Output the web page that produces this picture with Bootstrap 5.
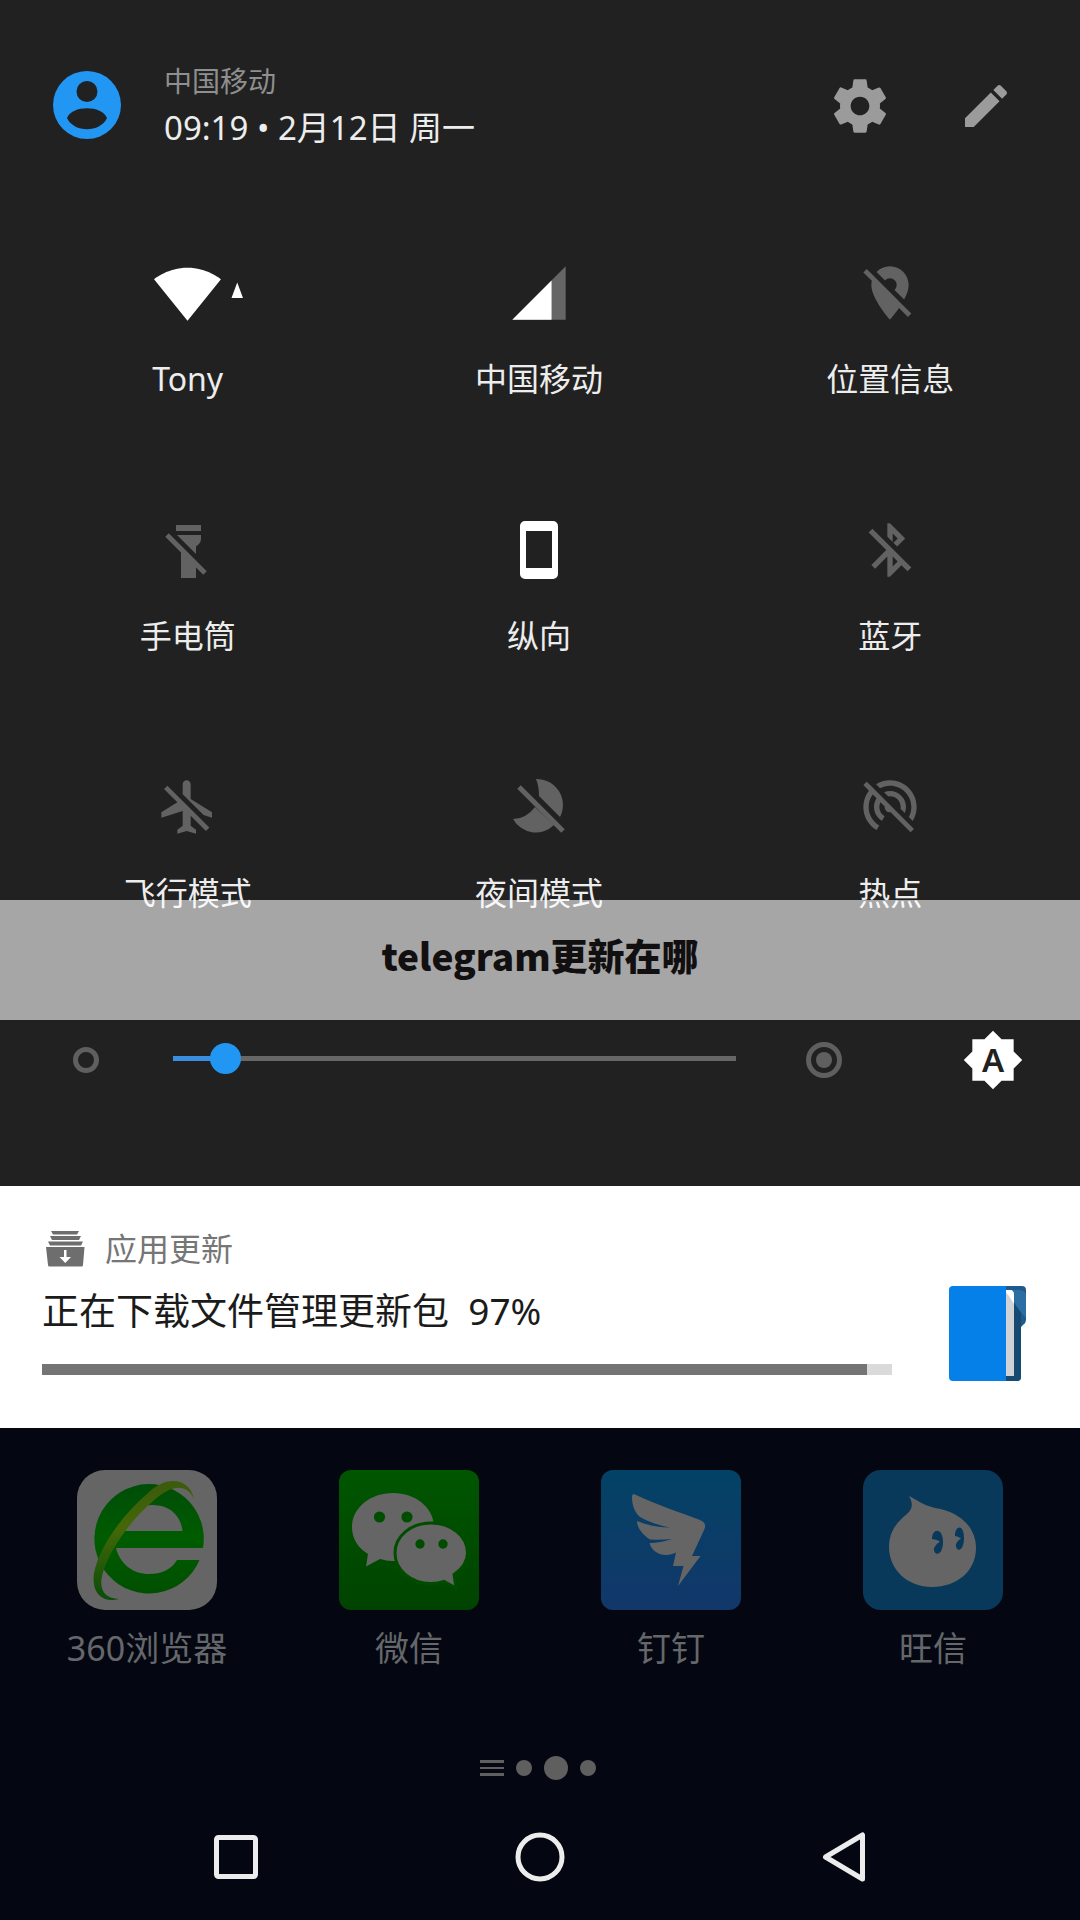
<!DOCTYPE html>
<html lang="zh-CN">
<head>
<meta charset="utf-8">
<meta name="viewport" content="width=device-width, initial-scale=1">
<title>快捷设置</title>
<link href="https://cdn.jsdelivr.net/npm/bootstrap@5.3.0/dist/css/bootstrap.min.css" rel="stylesheet">
<style>
  body { background: #040711; font-family: "Noto Sans", "Noto Sans CJK SC", sans-serif; }
  svg { display: block; overflow: visible; flex: none; }
  .btn, .btn:hover, .btn:active { color: inherit; }
  .shade { background: #212121; color: #ededed; padding-bottom: 94px; }
  .shade-head { padding: 59px 66px 0 52px; }
  .who { margin-left: 42px; }
  .carrier { font-size: 28px; line-height: 44px; color: #8f8f8f; }
  .clock { font-size: 33px; line-height: 50px; }
  .head-tools { gap: 66px; color: #9b9b9b; }
  .tiles { margin-top: 108px; padding: 0 14px 0 12px; }
  .tile.btn { height: 143px; font-size: 32px; line-height: 48px; }
  .tile-row + .tile-row { margin-top: 114px; }
  .tile-icon { height: 64px; margin-bottom: 30px; color: #fff; }
  .is-off .tile-icon { color: #626262; }
  .banner { bottom: 166px; height: 120px; background: rgba(255,255,255,.6); color: #120f10;
    font: 900 37px/50px "Noto Sans CJK SC", sans-serif; padding-bottom: 10px; }
  .bright { margin-top: 110px; height: 64px; padding: 0 56px 0 73px; color: #5f5f5f; }
  .bright-range { appearance: none; -webkit-appearance: none; background: none; height: 32px; margin: 0 70px 4px 74px; min-width: 0; }
  .bright-range::-webkit-slider-runnable-track { height: 5px; background: linear-gradient(to right, #3a8ee0 9%, #666 9%); }
  .bright-range::-webkit-slider-thumb { -webkit-appearance: none; width: 31px; height: 31px; margin-top: -13px; border-radius: 50%; background: #2196f3; }
  .auto-btn { margin-left: 120px; }
  .auto-btn text { font: 600 33px "Noto Sans", sans-serif; fill: #212121; }
  .note { background: #fff; padding: 37px 52px 0 42px; height: 242px; gap: 56px; }
  .note-app { font-size: 32px; line-height: 52px; color: #767676; gap: 20px; padding-left: 4px; }
  .note-title { font-size: 37px; line-height: 56px; color: #1b1b1b; margin-top: 8px; white-space: pre; }
  .note-bar { height: 11px; margin-top: 25px; border-radius: 0; background: #dadada; }
  .note-bar .progress-bar { background: #747474; }
  .note-pic { margin-top: 62px; }
  .apps { padding: 42px 16px 0; color: #65676b; font-size: 34px; line-height: 48px; }
  .apps a { color: inherit; gap: 14px; }
  .app-pic { width: 140px; height: 140px; }
  .pager { gap: 12px; margin-top: 84px; height: 24px; padding-right: 4px; }
  .dot { width: 16px; height: 16px; border-radius: 50%; background: #5f5f5f; }
  .dot-now { width: 24px; height: 24px; }
  .bars { width: 24px; height: 16px; border: solid #5f5f5f; border-width: 3px 0; }
  .bars::before { content: ""; display: block; height: 2px; margin-top: 4px; background: #5f5f5f; }
  .sysnav { margin-top: 47px; height: 60px; padding: 0 84px; }
</style>
<script src="https://cdn.jsdelivr.net/npm/bootstrap@5.3.0/dist/js/bootstrap.bundle.min.js"></script>
</head>
<body>
<main>
<section class="shade position-relative">
  <header class="shade-head d-flex align-items-center">
    <button class="btn p-0 border-0" aria-label="用户">
      <svg width="70" height="70" viewBox="0 0 70 70"><path fill="#2196f3" fill-rule="evenodd" d="M35 0a34 34 0 1 0 0 68a34 34 0 1 0 0-68zM35 10a10.500 10.500 0 1 1 0 21a10.500 10.500 0 1 1 0-21zM15 47C20 34 50 34 55 47C48 62 22 62 15 47z"/></svg>
    </button>
    <div class="who">
      <div class="carrier">中国移动</div>
      <div class="clock">09:19 • 2月12日 周一</div>
    </div>
    <div class="head-tools d-flex align-items-center ms-auto">
      <button class="btn p-0 border-0" aria-label="设置">
        <svg width="64" height="64" viewBox="0 0 24 24" fill="currentColor"><path d="M19.430 12.980c.04-.32.07-.64.07-.98s-.03-.66-.07-.98l2.110-1.650c.19-.15.24-.42.12-.64l-2-3.460c-.12-.22-.39-.3-.61-.22l-2.490 1c-.52-.4-1.080-.73-1.690-.98l-.38-2.650C14.460 2.180 14.250 2 14 2h-4c-.25 0-.46.18-.49.42l-.38 2.650c-.61.25-1.170.59-1.690.98l-2.490-1c-.23-.09-.49 0-.61.22l-2 3.460c-.13.22-.07.49.12.64l2.110 1.650c-.04.32-.07.65-.07.98s.03.66.07.98l-2.110 1.650c-.19.15-.24.42-.12.64l2 3.460c.12.22.39.3.61.22l2.490-1c.52.4 1.080.73 1.690.98l.38 2.650c.03.24.24.42.49.42h4c.25 0 .46-.18.49-.42l.38-2.650c.61-.25 1.170-.59 1.690-.98l2.490 1c.23.09.49 0 .61-.22l2-3.460c.12-.22.07-.49-.12-.64l-2.110-1.650zM12 15.500c-1.930 0-3.500-1.570-3.500-3.500s1.570-3.500 3.500-3.500 3.500 1.570 3.500 3.500-1.570 3.500-3.500 3.500z"/></svg>
      </button>
      <button class="btn p-0 border-0" aria-label="编辑">
        <svg width="56" height="56" viewBox="0 0 24 24" fill="currentColor"><path d="M3 17.250V21h3.750L17.810 9.940l-3.750-3.750L3 17.250zM20.710 7.040c.39-.39.39-1.020 0-1.410l-2.340-2.340c-.39-.39-1.020-.39-1.410 0l-1.830 1.830 3.750 3.750 1.830-1.830z"/></svg>
      </button>
    </div>
  </header>

  <div class="tiles">
    <div class="row g-0 tile-row">
      <div class="col-4"><button class="tile btn border-0 p-0 w-100 d-flex flex-column align-items-center">
        <span class="tile-icon d-flex align-items-center"><svg width="69" height="69" viewBox="0 0 24 24" fill="currentColor"><path d="M12.010 21.490L23.640 7c-.45-.34-4.930-4-11.640-4C5.280 3 .81 6.660.36 7l11.630 14.490zM27.300 13.600h4l-2-5.400z"/></svg></span>Tony</button></div>
      <div class="col-4"><button class="tile btn border-0 p-0 w-100 d-flex flex-column align-items-center">
        <span class="tile-icon d-flex align-items-center"><svg width="64" height="64" viewBox="0 0 24 24" fill="currentColor"><path fill="#666" d="M2 22h20V2z"/><path d="M2 22h14.700V7.300z"/></svg></span>中国移动</button></div>
      <div class="col-4"><button class="tile is-off btn border-0 p-0 w-100 d-flex flex-column align-items-center">
        <span class="tile-icon d-flex align-items-center"><svg width="64" height="64" viewBox="0 0 24 24" fill="currentColor"><path d="M12 6.500c1.380 0 2.500 1.120 2.500 2.500 0 .74-.33 1.390-.83 1.850l3.630 3.630c.98-1.860 1.700-3.800 1.700-5.480 0-3.870-3.130-7-7-7-1.980 0-3.760.83-5.040 2.150l3.190 3.190c.46-.52 1.110-.84 1.850-.84zm4.370 9.600l-4.630-4.630-.11-.11L3.270 3 2 4.270l3.180 3.180C5.070 7.950 5 8.470 5 9c0 5.250 7 13 7 13s1.670-1.850 3.380-4.350L18.730 21 20 19.730l-3.630-3.630z"/></svg></span>位置信息</button></div>
    </div>
    <div class="row g-0 tile-row">
      <div class="col-4"><button class="tile is-off btn border-0 p-0 w-100 d-flex flex-column align-items-center">
        <span class="tile-icon d-flex align-items-center"><svg width="64" height="64" viewBox="0 0 64 64" fill="currentColor"><path d="M20 7h25v6H20zM21 17h24v4q0 4-5 7.500V36zM25 30l15 14v16H25z"/><path d="M11 17l38 38" stroke="currentColor" stroke-width="5"/></svg></span>手电筒</button></div>
      <div class="col-4"><button class="tile btn border-0 p-0 w-100 d-flex flex-column align-items-center">
        <span class="tile-icon d-flex align-items-center"><svg width="64" height="64" viewBox="0 0 64 64" fill="currentColor"><path fill-rule="evenodd" d="M18 3h28a5 5 0 0 1 5 5v48a5 5 0 0 1-5 5H18a5 5 0 0 1-5-5V8a5 5 0 0 1 5-5zM19 13v37h26V13z"/></svg></span>纵向</button></div>
      <div class="col-4"><button class="tile is-off btn border-0 p-0 w-100 d-flex flex-column align-items-center">
        <span class="tile-icon d-flex align-items-center"><svg width="64" height="64" viewBox="0 0 24 24" fill="currentColor"><path d="M13 5.830l1.880 1.880-1.600 1.600 1.410 1.410 3.020-3.020L12 2h-1v5.030l2 2v-3.200zM5.410 4L4 5.410 10.590 12 5 17.590 6.410 19 11 14.410V22h1l4.290-4.290 2.300 2.290L20 18.590 5.410 4zM13 18.170v-3.760l1.880 1.880L13 18.170z"/></svg></span>蓝牙</button></div>
    </div>
    <div class="row g-0 tile-row">
      <div class="col-4"><button class="tile is-off btn border-0 p-0 w-100 d-flex flex-column align-items-center">
        <span class="tile-icon d-flex align-items-center"><svg width="64" height="64" viewBox="0 0 24 24" fill="currentColor"><path d="M13 9V3.500c0-.83-.67-1.500-1.500-1.500S10 2.670 10 3.500v3.680l7.830 7.830L21 16v-2l-8-5zM3 5.270l4.990 4.990L2 14v2l8-2.500V19l-2 1.500V22l3.500-1 3.500 1v-1.500L13 19v-3.730L18.730 21 20 19.730 4.270 4 3 5.270z"/></svg></span>飞行模式</button></div>
      <div class="col-4"><button class="tile is-off btn border-0 p-0 w-100 d-flex flex-column align-items-center">
        <span class="tile-icon d-flex align-items-center"><svg width="64" height="64" viewBox="0 0 64 64" fill="currentColor"><path d="M29 4A26 26 0 0 1 53 42L32 21Q32 11 29 4zM6 44A26 26 0 0 0 47 50L28 32Q19 44 6 44z"/><path d="M12 12l44 44" stroke="currentColor" stroke-width="5"/></svg></span>夜间模式</button></div>
      <div class="col-4"><button class="tile is-off btn border-0 p-0 w-100 d-flex flex-column align-items-center">
        <span class="tile-icon d-flex align-items-center"><svg width="64" height="64" viewBox="0 0 24 24" fill="currentColor"><path d="M17.560 14.240c.28-.69.44-1.450.44-2.240 0-3.310-2.690-6-6-6-.79 0-1.550.16-2.240.44l1.620 1.620c.2-.03.41-.06.62-.06 2.210 0 4 1.790 4 4 0 .21-.02.42-.05.63l1.610 1.610zM12 4c4.420 0 8 3.580 8 8 0 1.350-.35 2.620-.95 3.740l1.470 1.470C21.460 15.690 22 13.910 22 12c0-5.520-4.480-10-10-10-1.910 0-3.690.55-5.210 1.470l1.460 1.460C9.370 4.340 10.650 4 12 4zM3.270 2.500L2 3.770l2.100 2.100C2.790 7.570 2 9.690 2 12c0 3.700 2.010 6.920 4.990 8.650l1-1.730C5.610 17.530 4 14.960 4 12c0-1.760.57-3.380 1.530-4.690l1.430 1.440C6.360 9.680 6 10.800 6 12c0 2.220 1.210 4.150 3 5.190l1-1.740c-1.190-.7-2-1.970-2-3.450 0-.65.17-1.250.44-1.790l1.580 1.580L10 12c0 1.100.9 2 2 2l.21-.02.01.01 7.510 7.510L21 20.230 4.270 3.500l-1-1z"/></svg></span>热点</button></div>
    </div>
  </div>

  <div class="bright d-flex align-items-center">
    <svg width="26" height="26" viewBox="0 0 26 26"><circle cx="13" cy="13" r="10.500" fill="none" stroke="currentColor" stroke-width="5"/></svg>
    <input class="bright-range flex-grow-1" type="range" min="0" max="100" value="7" aria-label="亮度">
    <svg width="36" height="36" viewBox="0 0 36 36"><circle cx="18" cy="18" r="15.500" fill="none" stroke="currentColor" stroke-width="5"/><circle cx="18" cy="18" r="8" fill="currentColor"/></svg>
    <button class="auto-btn btn border-0 p-0" aria-label="自动亮度">
      <svg width="62" height="62" viewBox="0 0 62 62"><path transform="scale(2.583)" fill="#fff" d="M20 8.690V4h-4.690L12 .69 8.690 4H4v4.690L.69 12 4 15.310V20h4.690L12 23.310 15.310 20H20v-4.690L23.310 12 20 8.690z"/><text x="31" y="43" text-anchor="middle">A</text></svg>
    </button>
  </div>

  <div class="banner position-absolute start-0 end-0 d-flex align-items-center justify-content-center">telegram更新在哪</div>
</section>

<section class="note d-flex align-items-start">
  <div class="flex-grow-1">
    <div class="note-app d-flex align-items-center">
      <svg width="39" height="36" viewBox="0 0 39 36"><path fill="#6e6e6e" d="M5 0h28l-2 3.500H7zM4 5h31l-2 4H6zM2 10.500h35l-2 4H4zM0 16h38.500l-1.500 18q0 1.500-1.500 1.500h-32Q2 35.500 2 34z"/><path fill="#fff" d="M18 19h2.500v7H25l-5.750 6L13.500 26H18z"/></svg>
      <span>应用更新</span>
    </div>
    <div class="note-title">正在下载文件管理更新包  97%</div>
    <div class="note-bar progress" role="progressbar" aria-label="下载进度" aria-valuenow="97" aria-valuemin="0" aria-valuemax="100"><div class="progress-bar" style="width:97%"></div></div>
  </div>
  <svg class="note-pic" width="80" height="98" viewBox="0 0 80 98"><path fill="#1e5a8c" d="M50 1h24q4 0 4 4v30q0 3-3 5l-2 2v50q0 4-4 4H50z"/><path fill="#174a70" d="M58 5l15 20v67q0 4-4 4H55z"/><path fill="#2b6ea3" d="M58 5h13q7 0 7 6v22q-8-8-12-16z"/><path fill="#d0d3d6" d="M56 5h5q5 0 5 5v81H56z"/><path fill="#fff" d="M56 5h6q4 0 4 5v9l-5-8z"/><path fill="#0580e8" d="M5 1h53v95H5q-4 0-4-4V5q0-4 4-4z"/></svg>
</section>

<section class="apps">
  <div class="row g-0">
    <div class="col-3"><a href="#" class="d-flex flex-column align-items-center text-decoration-none">
      <svg class="app-pic" viewBox="0 0 140 140"><defs><linearGradient id="ge" x2="0" y2="1"><stop offset="0" stop-color="#004d08"/><stop offset=".5" stop-color="#005c00"/><stop offset="1" stop-color="#004f00"/></linearGradient><linearGradient id="gs" x2="0" y2="1"><stop offset="0" stop-color="#3c5a0c"/><stop offset=".4" stop-color="#436808"/><stop offset="1" stop-color="#0a4c0a"/></linearGradient></defs><rect width="140" height="140" rx="28" fill="#656565"/><path fill="url(#ge)" fill-rule="evenodd" d="M126 78A54.700 54.700 0 1 0 122.500 90H100C94 100 84 104 72 104C56 104 43 94 39 78zM43 61C50 43 60 35 76 35C93 35 104 46 105.500 61z"/><path fill="url(#gs)" d="M117 29C113 8 89 4 70 24C44 46 22 78 17 103C14 124 26 133 42 129C28 129 22 120 25 106C31 82 52 52 75 32C93 15 109 12 117 29z"/></svg>
      <span>360浏览器</span></a></div>
    <div class="col-3"><a href="#" class="d-flex flex-column align-items-center text-decoration-none">
      <svg class="app-pic" viewBox="0 0 140 140"><defs><linearGradient id="gw" x2="0" y2="1"><stop offset="0" stop-color="#005600"/><stop offset="1" stop-color="#004300"/></linearGradient></defs><rect width="140" height="140" rx="12" fill="url(#gw)"/><g fill="#656565"><path d="M54 23C77 23 95 38 95 57S77 91 54 91Q47 91 41 89L27 96.500L29 84Q13 74 13 57C13 38 31 23 54 23z"/><path stroke="#004d00" stroke-width="3" d="M92 53C112 53 128.500 66 128.500 83Q128.500 95 115 104.500L117 118L105 111.500Q99 113.500 92 113.500C72 113.500 56 100 56 83S72 53 92 53z"/></g><g fill="#004d00"><circle cx="40.500" cy="47" r="5.600"/><circle cx="68" cy="47" r="5.600"/><circle cx="81" cy="74" r="4.700"/><circle cx="104" cy="74" r="4.700"/></g></svg>
      <span>微信</span></a></div>
    <div class="col-3"><a href="#" class="d-flex flex-column align-items-center text-decoration-none">
      <svg class="app-pic" viewBox="0 0 140 140"><defs><linearGradient id="gd" x2="0" y2="1"><stop offset="0" stop-color="#034265"/><stop offset="1" stop-color="#12376a"/></linearGradient></defs><rect width="140" height="140" rx="12" fill="url(#gd)"/><path fill="#656565" d="M34 24.500C56 35 78 42 99 50Q106 53 103.500 59L91 86H99.500L77 116L82.500 96H72L75 82.500C65 88 51 84 48.500 73Q59 73 71 69Q60 70 49 69.500C42 65 36 58 36 51Q50 57 69 57.500Q51 54 39 47C33 42 31 34 31 27Q31 23 34 24.500z"/></svg>
      <span>钉钉</span></a></div>
    <div class="col-3"><a href="#" class="d-flex flex-column align-items-center text-decoration-none">
      <svg class="app-pic" viewBox="0 0 140 140"><rect width="140" height="140" rx="18" fill="#09395a"/><path fill="#656565" d="M46 26C54 30 60 35 72 38C98 42 113 58 113 78C113 101 94 117 69 117C45 117 26 100 26 77C26 61 35 51 44 44C50 39 50 33 46 26z"/><g fill="#09395a"><path d="M69 69C69 58 80 57 80 72C80 87 70 86 71 78Q74 73 77 71.500Q73 69 69 69z"/><path d="M92 66C92 55 101 54 101 68C101 83 92 82 93 74Q95 70 98 68.500Q95 66 92 66z"/></g></svg>
      <span>旺信</span></a></div>
  </div>
  <div class="pager d-flex align-items-center justify-content-center"><span class="bars"></span><span class="dot"></span><span class="dot dot-now"></span><span class="dot"></span></div>
</section>

<nav class="sysnav row g-0 align-items-center">
  <div class="col-4 d-flex justify-content-center"><button class="btn border-0 p-0" aria-label="最近任务"><svg width="50" height="50" viewBox="0 0 50 50" fill="none" stroke="#ececec" stroke-width="5"><rect x="5.500" y="5.500" width="39" height="39" rx="2"/></svg></button></div>
  <div class="col-4 d-flex justify-content-center"><button class="btn border-0 p-0" aria-label="主屏幕"><svg width="50" height="50" viewBox="0 0 50 50" fill="none" stroke="#ececec" stroke-width="5"><circle cx="25" cy="25" r="22"/></svg></button></div>
  <div class="col-4 d-flex justify-content-center"><button class="btn border-0 p-0" aria-label="返回"><svg width="50" height="50" viewBox="0 0 50 50" fill="none" stroke="#ececec" stroke-width="5" stroke-linejoin="round"><path d="M43.500 3v44L6.500 25z"/></svg></button></div>
</nav>
</main>
</body>
</html>
